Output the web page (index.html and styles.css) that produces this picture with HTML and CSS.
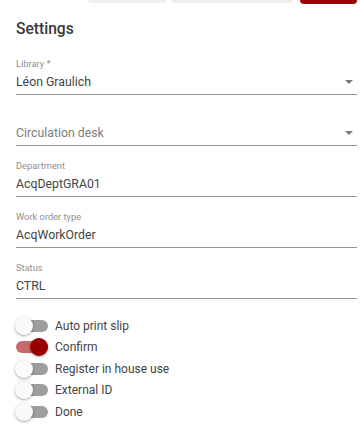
FILE: index.html
```html
<!DOCTYPE html>
<html lang="en">
<head>
    <meta charset="UTF-8">
    <title>Settings</title>
    <link rel="stylesheet" href="styles.css">
</head>

<body>
    <div class="panel">
        <div class="actions">
            <button class="btn btn-light one"></button>
            <button class="btn btn-light two"></button>
            <button class="btn btn-primary"></button>
        </div>

        <h2 class="title">Settings</h2>

        <div class="field select">
            <label class="field-label">Library *</label>
            <div class="field-value">Léon Graulich<span class="arrow"></span></div>
        </div>
        <div class="field select">
            <label class="field-label"></label>
            <div class="field-value placeholder">Circulation desk<span class="arrow"></span></div>
        </div>
        <div class="field">
            <label class="field-label">Department</label>
            <div class="field-value">AcqDeptGRA01</div>
        </div>
        <div class="field">
            <label class="field-label">Work order type</label>
            <div class="field-value">AcqWorkOrder</div>
        </div>
        <div class="field">
            <label class="field-label">Status</label>
            <div class="field-value">CTRL</div>
        </div>

        <div class="toggles">
            <div class="toggle"><span class="track"><span class="knob"></span></span>Auto print slip</div>
            <div class="toggle on"><span class="track"><span class="knob"></span></span>Confirm</div>
            <div class="toggle"><span class="track"><span class="knob"></span></span>Register in house use</div>
            <div class="toggle"><span class="track"><span class="knob"></span></span>External ID</div>
            <div class="toggle"><span class="track"><span class="knob"></span></span>Done</div>
        </div>
    </div>
</body>
</html>
```

FILE: styles.css
```css
body {
    margin: 0;
    font-family: Roboto, 'Noto Sans', sans-serif;
    background: #fff;
    color: rgba(0, 0, 0, 0.87);
}

.panel {
    padding: 0 4px 0 16px;
}

/* buttons of the toolbar, scrolled mostly out of view */
.actions {
    display: flex;
    justify-content: flex-end;
    gap: 4px;
    margin-top: -30px;
}

.btn {
    height: 33px;
    border: none;
    border-radius: 4px;
    padding: 0;
}

.btn-light { background-color: #efefef; }
.btn-light.one { width: 79px; }
.btn-light.two { width: 122px; margin-right: 3px; }
.btn-primary { width: 57px; height: 34px; background-color: #990000; }

.title {
    margin: 15px 0 17px;
    font-size: 15.6px;
    line-height: 20px;
    font-weight: 500;
    color: #3a3a3a;
}

.field {
    margin-bottom: 12px;
    border-bottom: 1px solid #949494;
}

.field-label {
    display: block;
    height: 14px;
    font-size: 9.3px;
    line-height: 15px;
    color: #8f8f8f;
}

.field-value {
    display: flex;
    align-items: center;
    justify-content: space-between;
    height: 24px;
    font-size: 12.3px;
    color: #444;
}

.field-value.placeholder {
    color: #7b7b7b;
}

.arrow {
    width: 0;
    height: 0;
    margin-right: 4px;
    border-left: 4px solid transparent;
    border-right: 4px solid transparent;
    border-top: 4px solid #777;
}

.toggles {
    margin-top: 16px;
}

.toggle {
    display: flex;
    align-items: center;
    height: 21.5px;
    font-size: 12px;
    color: #444;
}

.track {
    position: relative;
    width: 32px;
    height: 12px;
    margin-right: 7px;
    border-radius: 6px;
    background-color: #9e9e9e;
}

.knob {
    position: absolute;
    top: -3px;
    left: -1px;
    width: 18px;
    height: 18px;
    border-radius: 50%;
    background-color: #fafafa;
    box-shadow: 0 1px 3px rgba(0, 0, 0, 0.35);
}

.toggle.on .track { background-color: #c86a6a; }
.toggle.on .knob { left: 14px; background-color: #990000; }
```
